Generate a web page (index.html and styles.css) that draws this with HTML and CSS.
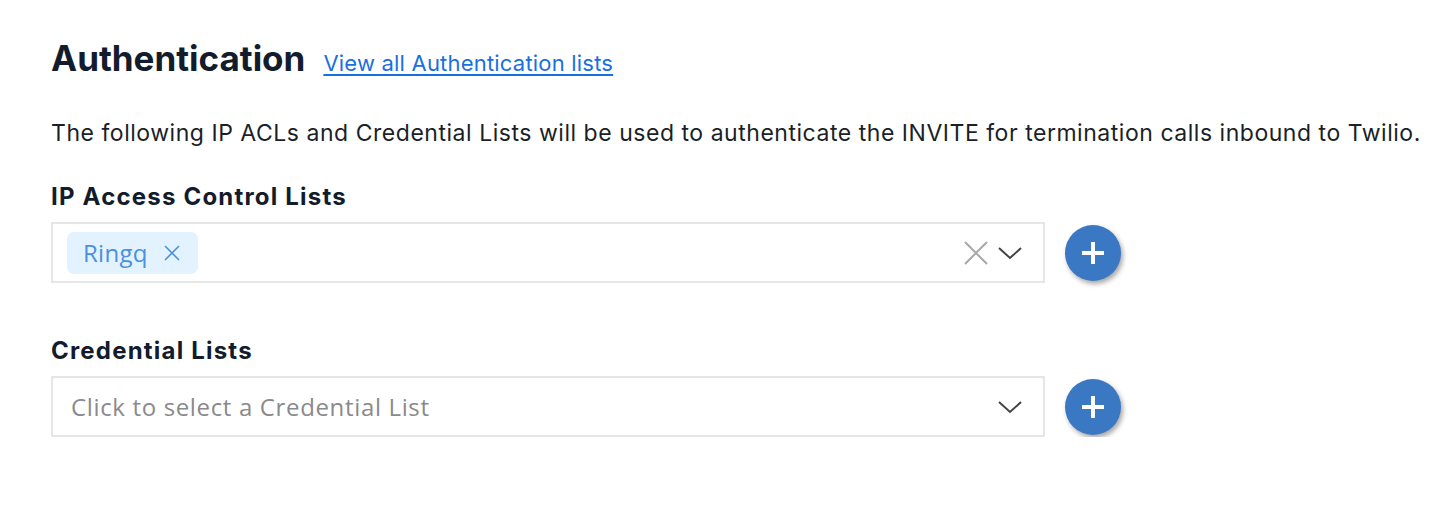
FILE: index.html
```html
<!DOCTYPE html>
<html>
<head>
<meta charset="utf-8">
<link rel="stylesheet" href="styles.css">
</head>
<body>
<main class="page">
  <div class="title-row">
    <h1 class="title">Authentication</h1>
    <a class="title-link" href="#">View all Authentication lists</a>
  </div>
  <p class="desc">The following IP ACLs and Credential Lists will be used to authenticate the INVITE for termination calls inbound to Twilio.</p>

  <section class="field">
    <div class="label">IP Access Control Lists</div>
    <div class="field-row">
      <div class="select">
        <div class="values">
          <span class="tag">Ringq
            <svg class="tag-x" viewBox="0 0 20 20" width="20" height="20"><path d="M3 3 L17 17 M17 3 L3 17" stroke="currentColor" stroke-width="1.6" fill="none"/></svg>
          </span>
        </div>
        <div class="indicators">
          <svg class="clear" viewBox="0 0 26 26" width="26" height="26"><path d="M2 2 L24 24 M24 2 L2 24" stroke="#a8a8a8" stroke-width="2" fill="none"/></svg>
          <svg class="chev" viewBox="0 0 26 16" width="26" height="16"><path d="M2 3 L13 13 L24 3" stroke="#444" stroke-width="2" fill="none"/></svg>
        </div>
      </div>
      <button class="add" type="button"><svg viewBox="0 0 24 24" width="24" height="24"><path d="M12 1 V23 M1 12 H23" stroke="#fff" stroke-width="4" fill="none"/></svg></button>
    </div>
  </section>

  <section class="field field-second">
    <div class="label">Credential Lists</div>
    <div class="field-row">
      <div class="select">
        <div class="values"><span class="placeholder">Click to select a Credential List</span></div>
        <div class="indicators">
          <svg class="chev" viewBox="0 0 26 16" width="26" height="16"><path d="M2 3 L13 13 L24 3" stroke="#444" stroke-width="2" fill="none"/></svg>
        </div>
      </div>
      <button class="add" type="button"><svg viewBox="0 0 24 24" width="24" height="24"><path d="M12 1 V23 M1 12 H23" stroke="#fff" stroke-width="4" fill="none"/></svg></button>
    </div>
  </section>
</main>
</body>
</html>
```

FILE: styles.css
```css
html, body {
  margin: 0;
  padding: 0;
  background: #fff;
}
body {
  font-family: Inter, "Liberation Sans", sans-serif;
  color: #121c2d;
}
.page {
  padding: 36px 0 0 51px;
}
.title-row {
  display: flex;
  align-items: baseline;
  gap: 18px;
}
.title {
  margin: 0;
  font-size: 35px;
  font-weight: 700;
  letter-spacing: 0;
  line-height: 44px;
}
.title-link {
  color: #1a6fe0;
  font-size: 22px;
  letter-spacing: 0.2px;
  text-decoration: underline;
  text-underline-offset: 3px;
}
.desc {
  margin: 38px 0 0;
  font-size: 23px;
  letter-spacing: 0.53px;
  line-height: 30px;
  color: #1b1f27;
}
.field {
  margin-top: 34px;
}
.field-second {
  margin-top: 53px;
}
.label {
  font-size: 24px;
  font-weight: 700;
  line-height: 30px;
  margin-bottom: 10px;
  letter-spacing: 1.2px;
}
.field-row {
  display: flex;
  align-items: center;
  gap: 20px;
}
.select {
  box-sizing: border-box;
  width: 994px;
  height: 61px;
  border: 2px solid #e6e6e6;
  display: flex;
  align-items: center;
  justify-content: space-between;
  padding: 0 20px 0 14px;
}
.values {
  display: flex;
  align-items: center;
}
.tag {
  display: inline-flex;
  align-items: center;
  gap: 14px;
  height: 42px;
  box-sizing: border-box;
  padding: 0 16px 0 16px;
  background: #e2f3ff;
  border-radius: 7px;
  color: #4a8fe0;
  font-family: "Open Sans", sans-serif;
  font-size: 24px;
  letter-spacing: 0.3px;
}
.tag-x {
  display: block;
}
.placeholder {
  font-family: "Open Sans", sans-serif;
  font-size: 24px;
  letter-spacing: 0.65px;
  color: #8a8a8a;
  padding-left: 4px;
}
.indicators {
  display: flex;
  align-items: center;
  gap: 8px;
}
.clear, .chev {
  display: block;
}
.add {
  width: 56px;
  height: 56px;
  border-radius: 50%;
  border: none;
  padding: 0;
  background: #3a78c3;
  box-shadow: 2px 3px 5px rgba(0,0,0,0.35);
  display: flex;
  align-items: center;
  justify-content: center;
}
.add svg {
  display: block;
}
```
